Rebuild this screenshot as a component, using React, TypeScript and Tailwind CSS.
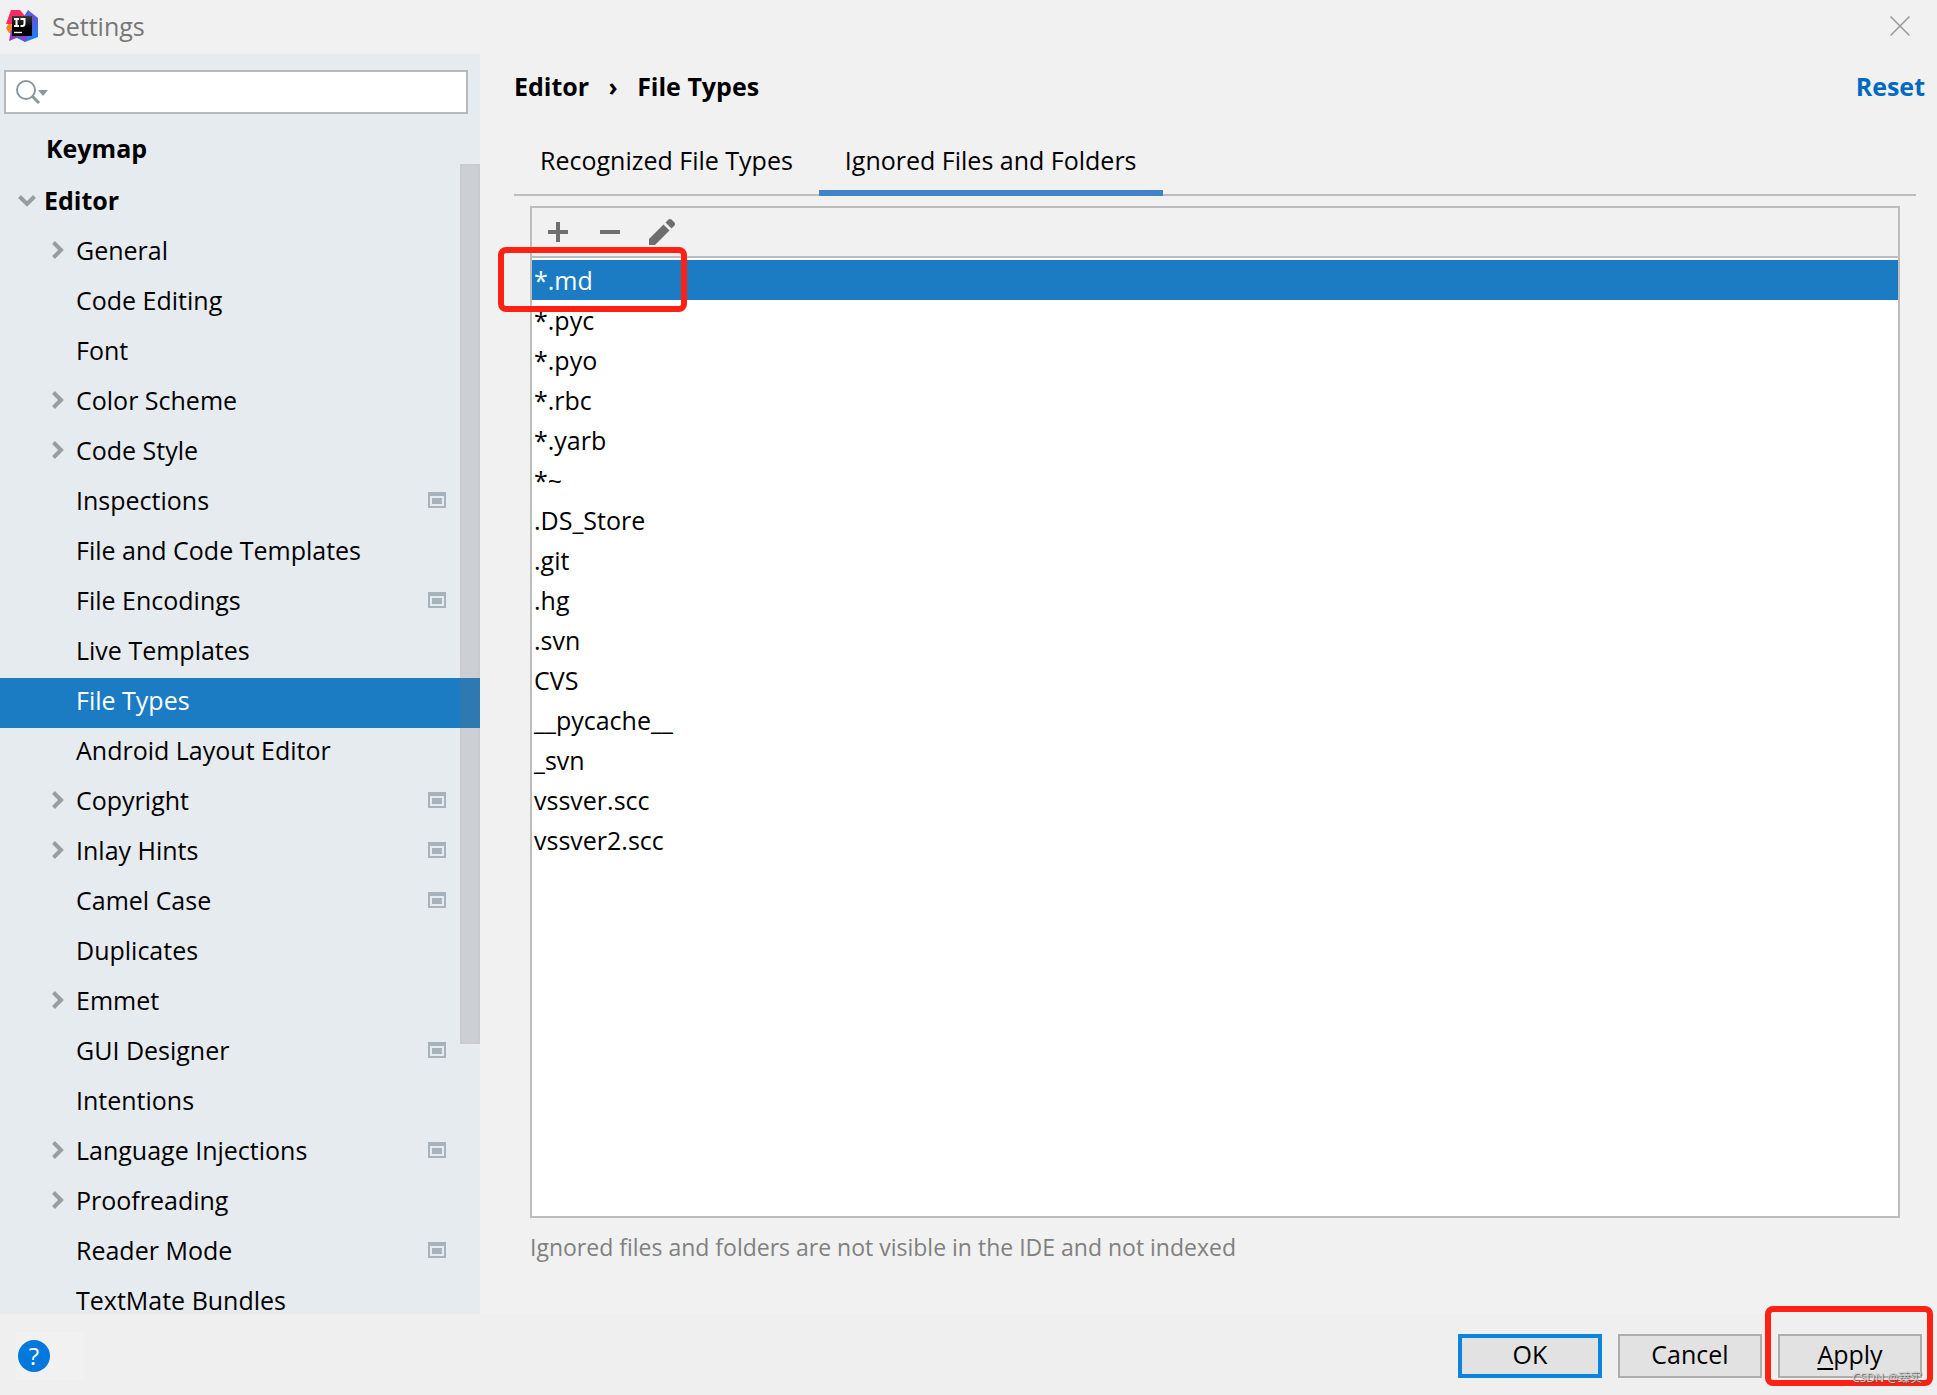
import { useState } from "react";

import clsx from "clsx";

type TreeItem = { name: string; arrow?: boolean; scoped?: boolean };

const treeItems: TreeItem[] = [
    { name: "General", arrow: true },
    { name: "Code Editing" },
    { name: "Font" },
    { name: "Color Scheme", arrow: true },
    { name: "Code Style", arrow: true },
    { name: "Inspections", scoped: true },
    { name: "File and Code Templates" },
    { name: "File Encodings", scoped: true },
    { name: "Live Templates" },
    { name: "File Types" },
    { name: "Android Layout Editor" },
    { name: "Copyright", arrow: true, scoped: true },
    { name: "Inlay Hints", arrow: true, scoped: true },
    { name: "Camel Case", scoped: true },
    { name: "Duplicates" },
    { name: "Emmet", arrow: true },
    { name: "GUI Designer", scoped: true },
    { name: "Intentions" },
    { name: "Language Injections", arrow: true, scoped: true },
    { name: "Proofreading", arrow: true },
    { name: "Reader Mode", scoped: true },
    { name: "TextMate Bundles" },
];

const tabs = ["Recognized File Types", "Ignored Files and Folders"];

const patterns = [
    "*.md",
    "*.pyc",
    "*.pyo",
    "*.rbc",
    "*.yarb",
    "*~",
    ".DS_Store",
    ".git",
    ".hg",
    ".svn",
    "CVS",
    "__pycache__",
    "_svn",
    "vssver.scc",
    "vssver2.scc",
];

function Logo() {
    return (
        <svg width="32" height="32" viewBox="0 0 32 32" aria-hidden="true">
            <defs>
                <linearGradient id="logo-blue" x1="0" y1="0" x2="0.4" y2="1">
                    <stop offset="0" stopColor="#2f7bea" />
                    <stop offset="0.45" stopColor="#6a52d8" />
                    <stop offset="1" stopColor="#1f7cf5" />
                </linearGradient>
                <linearGradient id="logo-purple" x1="0" y1="1" x2="1" y2="0">
                    <stop offset="0" stopColor="#b02fb0" />
                    <stop offset="1" stopColor="#5c5ae0" />
                </linearGradient>
                <linearGradient id="logo-black" x1="0" y1="0" x2="0" y2="1">
                    <stop offset="0" stopColor="#3a3a3a" />
                    <stop offset="0.6" stopColor="#000" />
                </linearGradient>
            </defs>
            <path d="M0 18 3 13l5 3v8l-5 -1z" fill="#fb8420" />
            <path d="M22 0 32 8v19L19 32 9 27V8h8z" fill="url(#logo-blue)" />
            <path d="M5 20 3 31l10 -4 6 5 4 -8z" fill="url(#logo-purple)" />
            <path d="M5 0h9l5 6 -5 8H0z" fill="#fb2a62" />
            <path d="M6 6h20v20H6z" fill="url(#logo-black)" />
            <path d="M8 22.500h8" stroke="#fff" strokeWidth="1.400" />
            <path d="M8 9h5M10.500 9v7M8 16h5M14.500 9h4v4.500q0 2.500 -2.500 2.500h-1.500" fill="none" stroke="#fff" strokeWidth="2" />
        </svg>
    );
}

function Chevron({ open }: { open?: boolean }) {
    return (
        <svg
            className={clsx("shrink-0", open && "rotate-90")}
            width="18"
            height="18"
            viewBox="0 0 18 18"
            fill="none"
            stroke="#9a9da0"
            strokeWidth="4"
            aria-hidden="true"
        >
            <path d="M5.500 1.500 13 9l-7.500 7.500" />
        </svg>
    );
}

function ScopeIcon() {
    return (
        <svg className="shrink-0" width="18" height="16" viewBox="0 0 18 16" fill="#a7b3bb" aria-hidden="true">
            <path fillRule="evenodd" d="M0 0h18v16H0zM2 4v10h14V4z" />
            <path d="M4 6h10v6H4z" />
        </svg>
    );
}

function Sidebar() {
    const [selected, setSelected] = useState("File Types");

    return (
        <aside className="relative flex w-[480px] shrink-0 flex-col overflow-hidden bg-[#e6ebef] pt-4">
            <label className="ml-1 mr-3 flex h-11 shrink-0 items-center border-2 border-[#b9b9b9] bg-white px-[10px]">
                <svg width="32" height="24" viewBox="0 0 32 24" aria-hidden="true">
                    <circle cx="10" cy="10" r="9" fill="none" stroke="#8b989f" strokeWidth="2" />
                    <path d="m16 16 7 7" stroke="#8b989f" strokeWidth="3" />
                    <path d="M22 10h10l-5 6z" fill="#8b989f" />
                </svg>
                <input type="text" aria-label="Search settings" className="min-w-0 flex-1 outline-none" />
            </label>

            <nav className="mt-3 min-h-0 flex-1 leading-7">
                <button className="mb-[2px] flex h-[50px] w-full items-center pb-[6px] pl-[46px] font-bold">Keymap</button>
                <button className="flex h-[50px] w-full items-center gap-2 pb-[6px] pl-[18px] font-bold">
                    <Chevron open />
                    Editor
                </button>
                {treeItems.map((item) => (
                    <button
                        key={item.name}
                        onClick={() => setSelected(item.name)}
                        className={clsx(
                            "flex h-[50px] w-full items-center pb-[6px] pl-12 pr-[34px] text-left",
                            selected === item.name && "bg-[#1b7bc3] text-white"
                        )}
                    >
                        <span className="w-7 shrink-0">{item.arrow && <Chevron />}</span>
                        <span className="flex-1">{item.name}</span>
                        {item.scoped && <ScopeIcon />}
                    </button>
                ))}
            </nav>

            {/* scrollbar thumb, drawn over the tree */}
            <div className="absolute right-0 top-[110px] h-[880px] w-5 border-2 border-[#7070780a] bg-[#70707838]" />
        </aside>
    );
}

function IgnoredList() {
    const [selected, setSelected] = useState("*.md");

    return (
        <div className="flex min-h-0 flex-1 flex-col border-2 border-[#bdbdbd]">
            <div className="relative flex h-[50px] shrink-0 items-center gap-[26px] border-b-2 border-[#bdbdbd] px-[13px] text-[#6e6e6e]">
                <button aria-label="Add" className="flex size-[26px] items-center justify-center">
                    <svg className="size-5" viewBox="0 0 20 20" fill="currentColor">
                        <path d="M8 0h4v8h8v4h-8v8H8v-8H0V8h8z" />
                    </svg>
                </button>
                <button aria-label="Remove" className="flex size-[26px] items-center justify-center">
                    <svg className="size-5" viewBox="0 0 20 20" fill="currentColor">
                        <path d="M0 8h20v4H0z" />
                    </svg>
                </button>
                <button aria-label="Edit" className="flex size-[26px] items-center justify-center">
                    <svg className="size-[26px]" viewBox="0 0 26 26" fill="currentColor">
                        <path d="M0 20 14.500 5.500l6 6L6 26H0z" />
                        <path d="m16.500 3.500 3 -3q1.500 -1 3 0l3 3q1 1.500 0 3l-3 3z" />
                    </svg>
                </button>
                <div className="pointer-events-none absolute -left-[34px] top-[39px] z-10 h-[65px] w-[189px] rounded-lg border-[6px] border-[#ff2114]" />
            </div>

            <ul className="flex-1 bg-white pt-[2px]">
                {patterns.map((pattern) => (
                    <li key={pattern}>
                        <button
                            onClick={() => setSelected(pattern)}
                            className={clsx(
                                "flex h-10 w-full items-center px-[2px]",
                                selected === pattern && "bg-[#1b7bc3] text-white"
                            )}
                        >
                            {pattern}
                        </button>
                    </li>
                ))}
            </ul>
        </div>
    );
}

export default function App() {
    const [activeTab, setActiveTab] = useState(tabs[1]);

    return (
        <div className="flex h-screen flex-col overflow-hidden bg-[#f1f1f1] font-['Open_Sans','Noto_Sans_CJK_SC',sans-serif] text-[25px] leading-[34px] text-black">
            <header className="flex h-[54px] shrink-0 items-center pb-[2px] pl-[6px] pr-[27px]">
                <Logo />
                <h1 className="ml-[14px] flex-1 text-[#777777]">Settings</h1>
                <button aria-label="Close">
                    <svg width="20" height="20" viewBox="0 0 20 20" stroke="#999" strokeWidth="1.500">
                        <path d="m0.500 0.500 19 19M19.500 0.500l-19 19" />
                    </svg>
                </button>
            </header>

            <div className="flex min-h-0 flex-1">
                <Sidebar />

                <main className="flex min-w-0 flex-1 flex-col pl-[34px]">
                    <div className="flex items-center pr-3 pt-[15px] font-bold">
                        <span>Editor</span>
                        <span className="w-12 text-center">›</span>
                        <h2 className="flex-1">File Types</h2>
                        <button className="text-[#006ac1]">Reset</button>
                    </div>

                    <div role="tablist" className="mr-[21px] mt-[23px] flex h-[70px] border-b-2 border-[#bdbdbd]">
                        {tabs.map((tab) => (
                            <button
                                key={tab}
                                role="tab"
                                aria-selected={activeTab === tab}
                                onClick={() => setActiveTab(tab)}
                                className={clsx(
                                    "-mb-[2px] border-b-[6px] px-[26px] pt-1",
                                    activeTab === tab ? "border-[#4083c9]" : "border-transparent"
                                )}
                            >
                                {tab}
                            </button>
                        ))}
                    </div>

                    <section className="ml-4 mr-[37px] mt-[10px] flex min-h-0 flex-1 flex-col">
                        <IgnoredList />
                        <p className="pb-[50px] pt-[13px] text-[23px] leading-[33px] text-[#808080]">
                            Ignored files and folders are not visible in the IDE and not indexed
                        </p>
                    </section>
                </main>
            </div>

            <footer className="flex h-[81px] shrink-0 items-center justify-between bg-[#efefef] pl-4 pr-[15px] pt-[3px]">
                <div className="flex h-12 w-[68px] items-center bg-[#f1f1f1] pl-[2px]">
                    <button aria-label="Help" className="size-8 rounded-full bg-[#0078dc] text-white">
                        <span className="block text-[24px] leading-8">?</span>
                    </button>
                </div>
                <div className="flex gap-4">
                    <button className="h-11 w-36 border-4 border-[#0a84dd] bg-[#e2e2e2] pb-1 leading-8">OK</button>
                    <button className="h-11 w-36 border-2 border-[#adadad] bg-[#e2e2e2] pb-1 leading-8">Cancel</button>
                    <div className="relative">
                        <button className="h-11 w-36 border-2 border-[#adadad] bg-[#e2e2e2] pb-1 leading-8">
                            <span className="underline decoration-2 underline-offset-4">A</span>pply
                        </button>
                        <div className="pointer-events-none absolute -left-[13px] -top-7 h-20 w-[168px] rounded-lg border-[6px] border-[#ff2114]" />
                        <span className="absolute -bottom-2 right-0 text-[12px] leading-4 whitespace-nowrap text-[#d0d0d0] [text-shadow:1px_1px_1px_#555]">
                            CSDN @臻实
                        </span>
                    </div>
                </div>
            </footer>
        </div>
    );
}
